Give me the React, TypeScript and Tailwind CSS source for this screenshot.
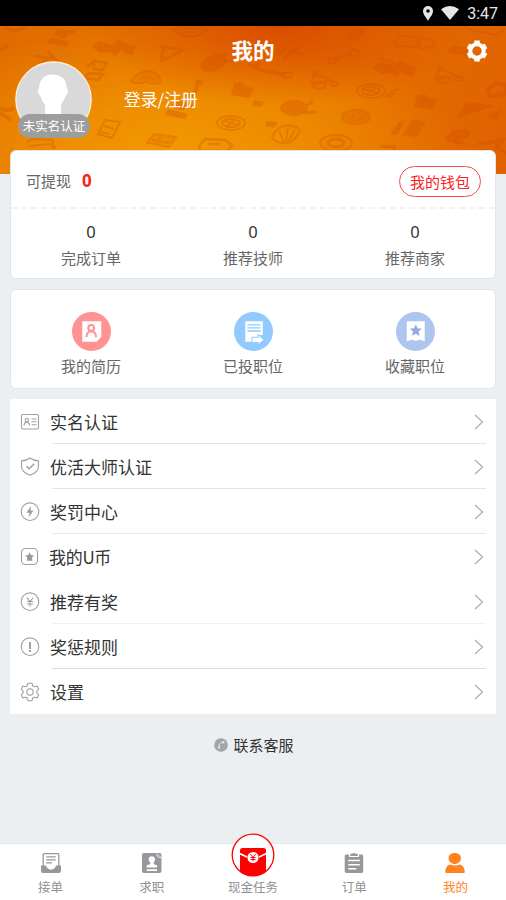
import React from 'react';

function HeaderPattern() {
  return (
    <svg
      className="absolute inset-0 h-full w-full"
      viewBox="0 0 506 148"
      preserveAspectRatio="none"
      fill="none"
      stroke="#d04a00"
      strokeWidth="1.800"
      opacity="0.3"
    >
      <defs>
        <g id="wheel">
          <ellipse rx="14" ry="7" />
          <ellipse rx="9" ry="4" />
          <path d="M-8-2 8 2M-5 4 5-4" />
        </g>
        <g id="cart">
          <path d="M-13 3-8-8 13 2M-11 4 9-1" strokeWidth="1.5" />
          <ellipse cx="-4" cy="4" rx="7" ry="3.500" />
          <ellipse cx="11" cy="3" rx="4" ry="2" />
          <circle cx="-8" cy="-7" r="2.500" />
        </g>
        <g id="box" fill="#d04a00" stroke="none">
          <path d="M-8-8 0-9l2 4 10 2-5 10-18-3z" />
        </g>
        <g id="book" fill="#d04a00" stroke="none">
          <path d="M-17 7-8-6l6-2-7 14zM-5 7 5-9l14 3-10 15z" />
        </g>
        <g id="stack" fill="#d04a00" stroke="none">
          <path d="m-14 3 4-4 19 5-3 5-20-4zM-8-3l5-6 19 2-4 4-5-1-3 5z" />
        </g>
        <g id="spanner">
          <path d="M-10 3 8-4" strokeWidth="3" />
          <ellipse cx="-11" cy="4" rx="4" ry="2.500" />
          <ellipse cx="11" cy="-4" rx="5" ry="3.500" />
        </g>
        <g id="dome" fill="#d04a00" fillOpacity="0.4">
          <path d="M-16 3Q-10-8 2-8 13-6 14 3 8 7-1 3-8 6-16 3z" />
          <path d="M-8 1Q0-5 9 2" fill="none" />
        </g>
        <g id="digger" fill="#d04a00" stroke="none">
          <path d="m-21 0 7-6 14 4 5-6 9 5 9 2-3 9-8-1-4-4-6 6-4-4-11 1z" />
        </g>
      </defs>
      <use href="#stack" x="61" y="12" />
      <path d="M5 2q12 5 20-1M0 24l8-5M35 30l20 3-7-7m-8 12 7-5" strokeWidth="3" />
      <use href="#digger" x="113" y="21" />
      <path d="m173 3 5-2 4 5h14l5-5 6 2-6 5q-12 5-22 0zm8-3q9 6 16 0" />
      <path d="m160 20 23 4-17 9-5-2 3-8zM177 24l5-3M165 31l-4 5" strokeWidth="2.500" />
      <path d="m94 35 13 2-5 7-8-1zM89 47l14 1-5 6-14-2zM94 35l-7 6" strokeWidth="2.500" />
      <ellipse cx="214" cy="37" rx="13" ry="7" fill="#d04a00" transform="rotate(-20 214 37)" />
      <path d="m207 38 20-10M212 43l20-9" />
      <use href="#dome" x="147" y="53" />
      <path d="m195 55 8 2m-5 0-3 10-7 4" strokeWidth="4" />
      <use href="#box" x="242" y="65" />
      <use href="#stack" x="179" y="84" />
      <use href="#wheel" x="231" y="97" />
      <path d="m105 94 15 2-8 16-14-4zM104 100l10 3M101 106l9 2" strokeWidth="2" />
      <path d="m154 108 22 3-7 10-22-4zm-2 6 18 3m-9-7-4 8" fill="#d04a00" fillOpacity="0.4" />
      <path d="M0 82q8 4 14 0M0 87l11 7" strokeWidth="4" />
      <path d="m27 116 6-3 19 1 3 9M29 120l21-2 4 5" strokeWidth="2" />
      <path d="m199 120 6-7 20 1 7 5-4 6h-28zM208 118h13" strokeWidth="2.500" />
      <path d="m280 21 23 8m-20 4 20-15M278 29l8-6" strokeWidth="3" />
      <path d="m354 1 13 2-9 12-14-2z" fill="#d04a00" stroke="none" />
      <path d="m311 2 6 1-3 3" strokeWidth="4" />
      <path d="m394 17 6-7 17 1 4 7-4 3-20-1zm21 0 8-5 10 2 2 6-14 3z" />
      <use href="#spanner" x="343" y="31" />
      <path d="m448 23 6-4 18 4-4 7-18-3z" fill="#d04a00" stroke="none" />
      <path d="m465 1 9 4 24 4 6-6" />
      <path d="m247 38 14 6 24 5m-31-9 6-2" strokeWidth="3.500" />
      <ellipse cx="287" cy="49" rx="5" ry="2.500" />
      <use href="#cart" x="323" y="55" />
      <use href="#digger" x="394" y="42" />
      <path d="m380 32 18 7" />
      <use href="#cart" x="448" y="50" />
      <use href="#wheel" x="371" y="65" />
      <path d="m385 71 9-7 5-1m-5 4-5 5" />
      <use href="#box" x="425" y="77" />
      <path d="m488 63 9-6 9 2v9l-16 2z" strokeWidth="4" />
      <ellipse cx="294" cy="82" rx="13" ry="7" fill="#d04a00" />
      <path d="m299 85 14-10m-15 12 19-1" strokeWidth="3" />
      <path d="m467 76 27 4-37 12q4-8 10-16zm19 15 16-9-5 12z" fill="#d04a00" stroke="none" />
      <ellipse cx="356" cy="91" rx="14" ry="7" fill="#d04a00" fillOpacity="0.6" />
      <path d="m350 94 5-6m3 7 5-6" />
      <path d="m254 74 10 2-3 5-9-1zM267 95l11 1-4 6-9-2z" fill="#d04a00" stroke="none" />
      <path d="M272 111q4-10 15-12 15 2 12 7-6 13-17 11-8-1-10-6zm7-6 5 11m4-15-2 16m9-14-7 14" />
      <use href="#book" x="407" y="102" />
      <ellipse cx="336" cy="117" rx="16" ry="8" />
      <ellipse cx="336" cy="117" rx="8" ry="4" strokeWidth="3" />
      <path d="m451 106 14-1q6 3-2 6l-12-2q-8 5 2 6l10 1m-7-6v8" strokeWidth="4" />
      <path d="m380 120 14 1 3 6m81-9 25-4-7 7 10 6" strokeWidth="3" />
    </svg>
  );
}

const stats = ['完成订单', '推荐技师', '推荐商家'];

const shortcuts = [
  {
    label: '我的简历',
    icon: (
      <svg width="39" height="39" viewBox="0 0 38 38">
        <circle cx="19" cy="19" r="19" fill="#ff9393" />
        <path d="M10 9H28.500v15l-4.500 5H10z" fill="#fff" />
        <circle cx="18.700" cy="15.500" r="2.800" fill="none" stroke="#ff9393" strokeWidth="2" />
        <path d="M14 24.500c0-7.500 9.500-7.500 9.500 0" fill="none" stroke="#ff9393" strokeWidth="2" />
      </svg>
    ),
  },
  {
    label: '已投职位',
    icon: (
      <svg width="39" height="39" viewBox="0 0 38 38">
        <circle cx="19" cy="19" r="19" fill="#90caff" />
        <path d="M11 9h17v13.500h-4V25l-6 1v3h-7z" fill="#fff" />
        <path d="M13 12.500h13M13 15.500h13M13 18.500h13" stroke="#90caff" strokeWidth="1.300" />
        <path d="M17.500 30v-5.500h6V22l6 5-6 5v-2.500z" fill="#fff" stroke="#90caff" strokeWidth="1" />
      </svg>
    ),
  },
  {
    label: '收藏职位',
    icon: (
      <svg width="39" height="39" viewBox="0 0 38 38">
        <circle cx="19" cy="19" r="19" fill="#adc5ef" />
        <path d="M10.500 9H28v19.500l-4.500-1.500-4.200 1-4.300-1-4.500 1.500z" fill="#fff" />
        <path d="m19.300 12 1.700 3.900 4.200.4-3.200 2.800 1 4.200-3.700-2.200-3.700 2.200 1-4.200-3.200-2.800 4.200-.4z" fill="#91ade0" />
      </svg>
    ),
  },
];

const menu = [
  {
    label: '实名认证',
    divider: 'border-[#e3e4e5]',
    icon: (
      <>
        <rect x="1.500" y="2.500" width="17" height="14.500" rx="1.500" />
        <circle cx="6.800" cy="8" r="1.700" />
        <path d="M4 13.500c.5-4.500 5.100-4.500 5.600 0M11.500 7h5M11.500 9.800h5M11.500 12.700h5" />
      </>
    ),
  },
  {
    label: '优活大师认证',
    divider: 'border-[#e3e4e5]',
    icon: (
      <>
        <path d="M10 1c2.500 1.900 5 2.600 8.500 2.900v5.400c0 4.300-3.700 7.300-8.500 8.900-4.800-1.600-8.500-4.600-8.500-8.900V3.900C5 3.600 7.500 2.900 10 1z" />
        <path d="m6.500 9.300 2.700 2.500 5-5" strokeWidth="1.500" />
      </>
    ),
  },
  {
    label: '奖罚中心',
    divider: 'border-[#e8e9ea]',
    icon: (
      <>
        <circle cx="10" cy="9.700" r="8.800" />
        <path d="M11 4 6.500 10.700h3L8.500 15.500 13.500 8.500h-3z" fill="#9b9b9b" stroke="none" />
      </>
    ),
  },
  {
    label: '我的U币',
    shift: true,
    icon: (
      <>
        <rect x="1.500" y="1.500" width="16" height="16" rx="4" />
        <path d="m9.600 5.500 1.400 2.500 3 .4-2 2.200.4 3.200H6.800l.4-3.200-2-2.200 3-.4z" fill="#9b9b9b" stroke="none" />
      </>
    ),
  },
  {
    label: '推荐有奖',
    divider: 'border-[#f0f1f2]',
    icon: (
      <>
        <circle cx="10" cy="9.700" r="8.800" />
        <path d="m6.800 5.500 3.200 4 3.200-4M10 9.500v5M7 9.500h6M7 12h6" />
      </>
    ),
  },
  {
    label: '奖惩规则',
    divider: 'border-[#dadcdd]',
    icon: (
      <>
        <circle cx="10" cy="9.700" r="8.800" />
        <path d="M10 5v7M10 13v2" strokeWidth="2" />
      </>
    ),
  },
  {
    label: '设置',
    icon: (
      <>
        <path
          d="M8 1.200h4l.8 2.600 1.700.9 2.600-.7 1.600 3.200-1.900 1.900v1.700l1.900 1.900-1.600 3.200-2.600-.7-1.700.9-.8 2.600H8l-.8-2.600-1.700-.9-2.600.7-1.600-3.200 1.900-1.900V9.100L1.300 7.200 2.900 4l2.600.7 1.700-.9z"
          strokeLinejoin="round"
        />
        <circle cx="10" cy="9.900" r="3.200" />
      </>
    ),
  },
];

const tabs = [
  {
    label: '接单',
    icon: (
      <svg width="20" height="20" viewBox="0 0 20 20">
        <path d="M2.200 13V1.500Q2.200.7 3 .7h14q.8 0 .8.8V13" fill="none" stroke="#96989b" strokeWidth="1.300" />
        <path d="M5.200 3.800h9.600M5.200 6.800h9.600M5.200 9.800h5.800" stroke="#96989b" strokeWidth="1.300" />
        <path d="M0 12.500h5c1 5.500 9 5.500 10 0h5V18q0 2-2 2H2q-2 0-2-2z" fill="#96989b" />
      </svg>
    ),
  },
  {
    label: '求职',
    icon: (
      <svg width="20" height="20" viewBox="0 0 20 20">
        <path d="M2 0h12.500L19.500 5v13q0 2-2 2H2q-2 0-2-2V2q0-2 2-2z" fill="#96989b" />
        <path d="M14.500 1q.5 3.500 4.500 4" fill="none" stroke="#fff" strokeWidth="0.800" />
        <path d="M14.800 0h2.700q2 0 2 2v2.500z" fill="#96989b" />
        <path d="M9.800 3.200c4 0 3.800 4.300 1.900 6.200v1.800l3.300 1V14.500H4.700v-2.300l3.600-1V9.400C6 7.500 5.800 3.200 9.800 3.200zM4.700 16.300H15V18H4.700z" fill="#fff" />
      </svg>
    ),
  },
  { label: '现金任务' },
  {
    label: '订单',
    icon: (
      <svg width="20" height="20" viewBox="0 0 20 20">
        <path d="M2.200 1.500H5V4h10V1.500h2.800q1.400 0 1.400 1.400v15.700q0 1.400-1.400 1.400H2.200Q.7 20 .7 18.600V2.900q0-1.400 1.500-1.400z" fill="#96989b" />
        <path d="M6.300.8H8Q10-.8 12 .8h1.700v2.200H6.300z" fill="#96989b" />
        <path d="M4.300 7.500h11.500M4.300 11.700h11.500M4.300 15.800h8" stroke="#fff" strokeWidth="1.500" />
      </svg>
    ),
  },
  {
    label: '我的',
    active: true,
    icon: (
      <svg width="20" height="20" viewBox="0 0 20 20">
        <path d="M9.700 0c4.300 0 6.200 2.300 6.200 5.500S13 11 9.700 11 3.600 8.700 3.600 5.500 5.400 0 9.700 0z" fill="#ff8420" />
        <path d="M.2 19q0-6 4.800-7.500q5 2 10 0 4.700 1.500 4.800 7.500 0 1-1 1H1.200q-1 0-1-1z" fill="#ff8420" />
      </svg>
    ),
  },
];

function StatusBar() {
  return (
    <div className="flex h-[26px] shrink-0 items-center justify-end bg-black pr-2 text-[#e6e6e6]">
      <svg width="10" height="15" viewBox="0 0 10 15" className="mr-[8px]">
        <path
          d="M5 0a5 5 0 0 1 5 5c0 3.500-3.500 7-5 9.700C3.500 12 0 8.500 0 5a5 5 0 0 1 5-5zm0 3.200a1.800 1.800 0 1 0 0 3.600 1.800 1.800 0 0 0 0-3.600z"
          fill="#e6e6e6"
        />
      </svg>
      <svg width="18" height="14" viewBox="0 0 18 14" className="mr-[8px]">
        <path d="M0 3.200Q9-3.200 18 3.200L9 14z" fill="#e6e6e6" />
      </svg>
      <span className="pt-[2px] font-[Roboto,sans-serif] text-[16px] leading-none">3:47</span>
    </div>
  );
}

function Header() {
  return (
    <header className="relative h-[148px] shrink-0 bg-[radial-gradient(ellipse_190px_80px_at_280px_0px,#d94c00_0%,#d94c0000_100%),radial-gradient(ellipse_290px_125px_at_170px_125px,#f29800_0%,#ee8d00_40%,#ee8d0000_100%),linear-gradient(100deg,#e06c00_0%,#e87600_50%,#e06200_100%)]">
      <HeaderPattern />
      <div className="relative flex h-[50px] items-center px-[18px]">
        <div className="w-[22px]" />
        <h1 className="flex-1 text-center text-[21.500px] font-bold leading-[48px] text-white">
          <span className="relative -top-px">我的</span>
        </h1>
        <svg width="22" height="22" viewBox="0 0 22 22" fill="none" stroke="#fff">
          <circle cx="11" cy="11" r="6.700" strokeWidth="4" />
          <path
            d="M11 .6v3M11 18.400v3M2 5.800l2.600 1.500M17.400 14.700l2.600 1.500M2 16.200l2.600-1.500M17.400 7.300 20 5.800"
            strokeWidth="5.500"
          />
        </svg>
      </div>
      <div className="relative -mt-[15px] flex items-start pl-[15px]">
        <div className="relative h-[77px] w-[77px]">
          <svg width="77" height="77" viewBox="0 0 77 77">
            <circle cx="38.500" cy="38.500" r="37.700" fill="#d9d9d9" stroke="#fff3e0" strokeWidth="1.200" />
            <path
              d="M37.500 13.500c9 0 14 5.500 14.200 13 .2 1.500 1.800 3 1.200 5-.4 1.700-2.300 3-3 5-1.400 4-3 5.500-3.900 7V53H30v-9.500c-1.500-2-3-3.500-4-7-.6-2-2.500-3.300-3-5-.6-2 .9-3.500 1-5 .5-7.500 5-13 13.500-13z"
              fill="#fff"
            />
          </svg>
          <span className="absolute left-[3px] top-[53px] flex h-[24px] w-[72px] items-center justify-center whitespace-nowrap rounded-full bg-[#9d9d9d] text-[12.500px] leading-none text-white">
            未实名认证
          </span>
        </div>
        <span className="ml-[32px] mt-[26px] text-[16.800px] leading-[24px] text-white">登录/注册</span>
      </div>
    </header>
  );
}

function TabBar() {
  return (
    <nav className="flex h-[57px] shrink-0 border-t border-[#e3e6e8] bg-white">
      {tabs.map((tab) => (
        <div key={tab.label} className="relative flex flex-1 flex-col items-center pt-[9px]">
          {tab.icon ?? (
            <svg width="44" height="44" viewBox="0 0 44 44" className="-mb-[4px] -mt-[20px] shrink-0">
              <circle cx="22" cy="22" r="21" fill="#fff" />
              <path d="M9 17.500q0-2.500 2.500-2.500h21q2.500 0 2.500 2.500v21A21 21 0 0 1 9 38.500z" fill="#f00" />
              <path d="M8.500 20.500 16 24M35.500 20.500 28 24" fill="none" stroke="#fff" strokeWidth="1.800" />
              <circle cx="22" cy="24.500" r="5.600" fill="#fff" />
              <path d="m19.300 21.300 2.700 3 2.700-3M22 24.300v4M19.500 24.500h5M19.500 26.500h5" fill="none" stroke="#f00" />
              <circle cx="22" cy="22" r="20.800" fill="none" stroke="#f00" strokeWidth="1.300" />
            </svg>
          )}
          <span
            className={`mt-[5px] text-[12.500px] leading-[18px] ${tab.active ? 'text-[#ff8420]' : 'text-[#909294]'}`}
          >
            {tab.label}
          </span>
        </div>
      ))}
    </nav>
  );
}

export default function App() {
  return (
    <div className="flex h-[900px] w-[506px] flex-col overflow-hidden bg-[#ebeff2] font-['Noto_Sans_CJK_SC',sans-serif] text-[#333]">
      <StatusBar />
      <Header />
      <main className="relative -mt-[24px] flex min-h-0 flex-1 flex-col px-[10px]">
        <section className="h-[129px] shrink-0 rounded-[6px] border border-[#e2e5e8] bg-white">
          <div className="flex h-[58px] items-center border-b-2 border-dashed border-[#f1f1f1] pl-[15px] pr-[14px] pt-[4px]">
            <span className="text-[15px] text-[#666]">可提现</span>
            <span className="ml-[11px] font-['Noto_Sans',sans-serif] text-[17px] font-bold text-[#fa1e1e]">0</span>
            <button className="ml-auto h-[31px] w-[82px] rounded-full border border-[#fb4a4a] text-[15px] leading-[27px] text-[#fa2222]">
              我的钱包
            </button>
          </div>
          <div className="-mx-px grid grid-cols-3 pt-[11px] text-center">
            {stats.map((label) => (
              <div key={label}>
                <div className="font-['Noto_Sans',sans-serif] text-[16.500px] leading-[24px]">0</div>
                <div className="mt-[2px] text-[15px] leading-[24px] text-[#666]">{label}</div>
              </div>
            ))}
          </div>
        </section>

        <section className="mt-[10px] h-[100px] shrink-0 rounded-[6px] border border-[#e2e5e8] bg-white pt-[22px]">
          <div className="-mx-px grid grid-cols-3">
            {shortcuts.map((item) => (
              <div key={item.label} className="flex flex-col items-center">
                {item.icon}
                <span className="mt-[3px] text-[15px] leading-[24px] text-[#666]">{item.label}</span>
              </div>
            ))}
          </div>
        </section>

        <section className="mt-[10px] shrink-0 bg-white">
          {menu.map((item) => (
            <div key={item.label} className="flex h-[45px] items-center pl-[10px] pr-[10px]">
              <svg width="20" height="20" viewBox="0 0 20 20" fill="none" stroke="#a0a0a0" strokeWidth="1.100">
                {item.icon}
              </svg>
              <div className={`ml-[12px] flex h-full flex-1 items-center border-b pt-px ${item.divider ?? 'border-transparent'}`}>
                <span className={`flex-1 text-[17px] leading-[24px] ${item.shift ? '-ml-[3px] tracking-[-0.3px]' : '-ml-[2px]'}`}>
                  {item.label}
                </span>
                <svg width="10" height="16" viewBox="0 0 10 16" fill="none" stroke="#b0b0b0" strokeWidth="1.300" className="mr-[2px]">
                  <path d="m1 1 7.500 7L1 15" />
                </svg>
              </div>
            </div>
          ))}
        </section>

        <div className="mt-[19px] flex items-center justify-center gap-[5px] pl-[2px]">
          <svg width="14" height="14" viewBox="0 0 14 14">
            <circle cx="7" cy="7" r="6.800" fill="#a2a4a5" />
            <path d="M10 4Q5 4 4.700 9.500" fill="none" stroke="#e4e7e9" strokeWidth="1" />
            <path d="m8 3.500 2.300-.2.200 2-2 .5zM3.700 8.500l2-.5.600 2-1.800 1z" fill="#e4e7e9" />
          </svg>
          <span className="text-[15px] leading-[24px]">联系客服</span>
        </div>
      </main>
      <TabBar />
    </div>
  );
}
